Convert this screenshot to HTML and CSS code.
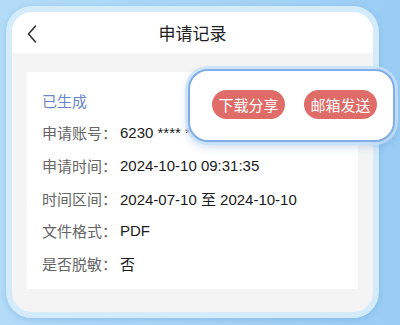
FILE: index.html
```html
<!DOCTYPE html>
<html lang="zh">
<head>
  <meta charset="UTF-8" />
  <title>申请记录</title>
  <link rel="stylesheet" href="styles.css">
</head>
<body>

<div class="phone">
  <header class="topbar">
    <span class="back">
      <svg width="10" height="18" viewBox="0 0 10 18"><polyline points="8.5,1 1.5,9 8.5,17" fill="none" stroke="#333" stroke-width="1.6" stroke-linecap="round" stroke-linejoin="round"/></svg>
    </span>
    <h1>申请记录</h1>
  </header>

  <div class="contenido">
    <div class="tarjeta">
      <div class="fila estado">已生成</div>
      <div class="fila"><span class="etiqueta">申请账号：</span><span class="valor">6230 **** **</span></div>
      <div class="fila"><span class="etiqueta">申请时间：</span><span class="valor">2024-10-10 09:31:35</span></div>
      <div class="fila"><span class="etiqueta">时间区间：</span><span class="valor">2024-07-10 至 2024-10-10</span></div>
      <div class="fila"><span class="etiqueta">文件格式：</span><span class="valor">PDF</span></div>
      <div class="fila"><span class="etiqueta">是否脱敏：</span><span class="valor">否</span></div>
    </div>
  </div>
</div>

<div class="popup">
  <button class="boton">下载分享</button>
  <button class="boton">邮箱发送</button>
</div>

</body>
</html>
```

FILE: styles.css
```css
body {
  margin: 0;
  width: 400px;
  height: 325px;
  overflow: hidden;
  position: relative;
  font-family: "Liberation Sans", "Noto Sans CJK SC", sans-serif;
  background: linear-gradient(to right, #b4dcf8, #a6d3f6 60%, #9acdf4);
}

.phone {
  position: absolute;
  left: 6px;
  top: 6px;
  width: 361px;
  height: 300px;
  border: 6px solid #d4ebfc;
  border-radius: 26px;
  overflow: hidden;
  background-color: #f4f4f4;
  box-shadow: 0 2px 6px rgba(90, 150, 210, 0.35);
}

.topbar {
  height: 41px;
  background-color: #fff;
  display: flex;
  align-items: center;
  justify-content: center;
  position: relative;
}

.topbar h1 {
  margin: 0;
  font-size: 17px;
  font-weight: normal;
  color: #222;
  font-family: "Noto Sans CJK SC", sans-serif;
}

.back {
  position: absolute;
  left: 15px;
  top: 13px;
  line-height: 0;
}

.contenido {
  padding: 19px 15px 0;
}

.tarjeta {
  background-color: #fff;
  padding: 12px 15px 8px;
  height: 197px;
}

.fila {
  height: 32.6px;
  display: flex;
  align-items: center;
  font-size: 15px;
}

.estado {
  color: #6a86c8;
  font-family: "Noto Sans CJK SC", sans-serif;
}

.etiqueta {
  color: #666;
  font-family: "Noto Sans CJK SC", sans-serif;
  width: 78px;
}

.valor {
  color: #1a1a1a;
}

.popup {
  position: absolute;
  left: 188px;
  top: 69px;
  width: 207px;
  height: 73px;
  box-sizing: border-box;
  border: 2px solid #80aee8;
  border-radius: 20px;
  background-color: #fff;
  box-shadow: 0 0 0 3px rgba(200, 225, 250, 0.8), 0 4px 10px rgba(60, 120, 200, 0.3);
  display: flex;
  align-items: center;
  justify-content: center;
  gap: 19px;
  padding-left: 6px;
}

.boton {
  width: 73px;
  height: 29px;
  border: none;
  border-radius: 15px;
  background-color: #e06c68;
  color: #fff;
  font-size: 15px;
  font-family: "Noto Sans CJK SC", sans-serif;
  padding: 0;
  margin-top: -2px;
}
```
